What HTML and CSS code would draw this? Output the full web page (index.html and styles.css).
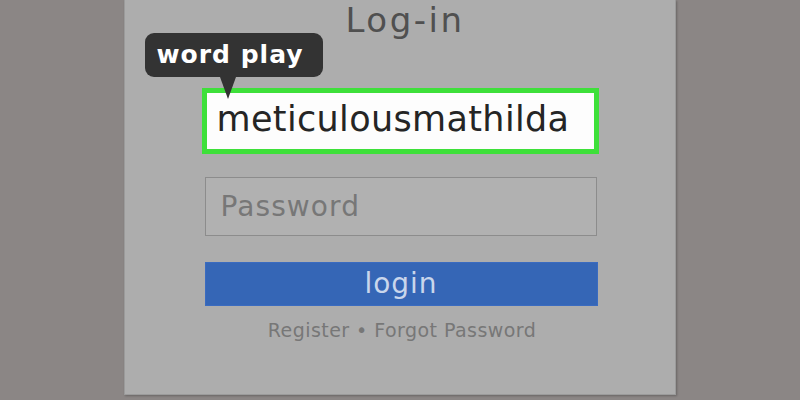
FILE: index.html
```html
<!DOCTYPE html>
<html>

<head>
    <title>Log-in</title>
    <link rel="stylesheet" href="styles.css">
</head>

<body>
    <div class="card">
        <h1 class="title">Log-in</h1>

        <div class="form">
            <div class="field field-active">
                meticulousmathilda
                <div class="tip">word play</div>
            </div>
            <div class="field field-empty">Password</div>
            <div class="btn">login</div>
            <p class="links">Register &bull; Forgot Password</p>
        </div>
    </div>
</body>

</html>
```

FILE: styles.css
```css
body {
    margin: 0;
    background: #8b8685;
    font-family: "DejaVu Sans", sans-serif;
    height: 400px;
    overflow: hidden;
}

.card {
    width: 552px;
    height: 395px;
    margin: 0 auto;
    box-sizing: border-box;
    background: #adadad;
    border: 1px solid #9b9b9b;
    border-top: none;
    box-shadow: 1px 1px 2px rgba(0, 0, 0, 0.25);
    display: flex;
    flex-direction: column;
    align-items: center;
}

.title {
    margin: 0;
    padding-left: 10px;
    font-size: 34px;
    line-height: 40px;
    font-weight: normal;
    letter-spacing: 2.5px;
    color: #505050;
}

.form {
    width: 397px;
    margin-top: 48px;
    display: flex;
    flex-direction: column;
}

.field {
    position: relative;
    box-sizing: border-box;
}

.field-active {
    height: 66px;
    border: 5px solid #3ee03a;
    background: #fdfdfd;
    padding-left: 10px;
    font-size: 35px;
    line-height: 52px;
    letter-spacing: 0.35px;
    color: #252525;
}

.field-empty {
    margin: 23px 2px 0 3px;
    height: 59px;
    border: 1px solid #8c8c8c;
    background: #b1b1b1;
    padding-left: 15px;
    font-size: 28px;
    line-height: 57px;
    letter-spacing: 1.1px;
    color: #777;
}

.tip {
    position: absolute;
    left: -62px;
    top: -60px;
    width: 178px;
    height: 44px;
    box-sizing: border-box;
    padding-left: 12px;
    border-radius: 9px;
    background: #333;
    color: #fff;
    font-weight: bold;
    font-size: 25px;
    line-height: 44px;
    letter-spacing: 1px;
}

.tip:after {
    content: "";
    position: absolute;
    left: 75px;
    top: 44px;
    border-left: 8px solid transparent;
    border-right: 8px solid transparent;
    border-top: 22px solid #333;
}

.btn {
    margin: 26px 1px 0 3px;
    height: 44px;
    background: #3566b6;
    border: 1px solid #3a6bc0;
    box-sizing: border-box;
    text-align: center;
    font-size: 28px;
    line-height: 42px;
    letter-spacing: 1px;
    color: #c9d6ec;
}

.links {
    margin: 12px 0 0;
    padding-left: 4px;
    text-align: center;
    font-size: 19px;
    line-height: 24px;
    letter-spacing: 0.45px;
    color: #777;
}
```
